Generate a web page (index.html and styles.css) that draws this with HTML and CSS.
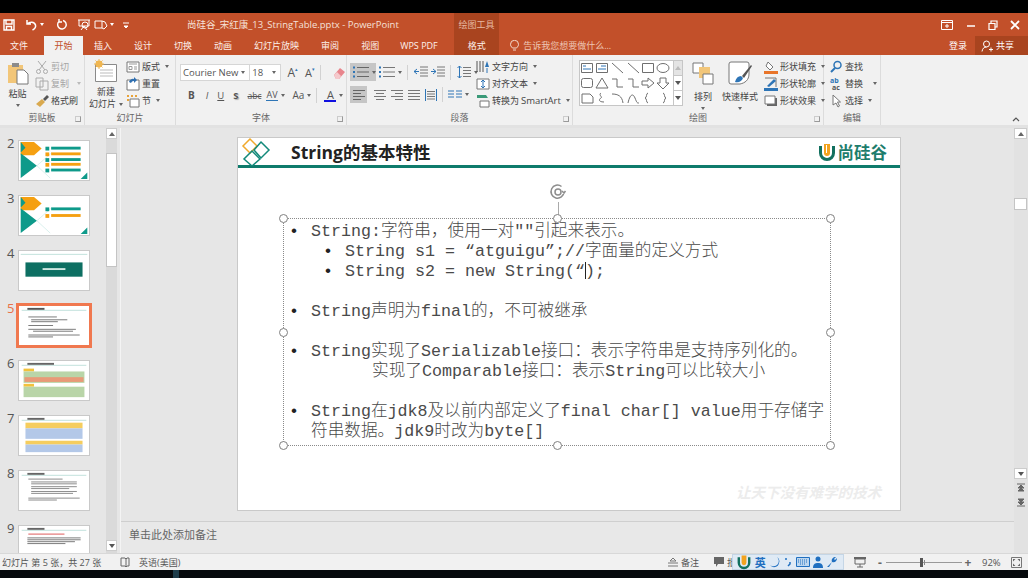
FILE: index.html
```html
<!DOCTYPE html>
<html lang="zh-CN">
<head>
<meta charset="UTF-8"/>
<title>尚硅谷_宋红康_13_StringTable.pptx - PowerPoint</title>
<link rel="stylesheet" href="styles.css">
</head>
<body>
<div class="app">
  <div class="black-top"></div>

  <div class="head">
    <div class="titlebar">
      <div class="qat">
        <svg class="q1" width="14" height="14" viewBox="0 0 14 14"><path d="M2 2h10v10H2z M4 2v4h6V2 M4.5 12V8.500h5V12" fill="none" stroke="#fff" stroke-width="1.400"/></svg>
        <svg class="q2" width="14" height="14" viewBox="0 0 14 14"><path d="M3 2v4h4 M3.500 6c2-2.500 7-2.500 8 1 .5 2-1 4-3 5" fill="none" stroke="#fff" stroke-width="1.500"/></svg>
        <span class="caret-w q3"></span>
        <svg class="q4" width="12" height="14" viewBox="0 0 12 14"><path d="M7 2.500A4.300 4.300 0 1 1 3 3.500 M3 1v3h3" fill="none" stroke="#fff" stroke-width="1.400"/></svg>
        <svg class="q5" width="14" height="14" viewBox="0 0 14 14"><path d="M1 2h12 M2 2v6h10V2 M4 12l3-4 3 4" fill="none" stroke="#fff" stroke-width="1"/><circle cx="8" cy="7" r="3" fill="none" stroke="#fff"/></svg>
        <svg class="q6" width="14" height="14" viewBox="0 0 14 14"><path d="M1 3h7v7H1z M8 3l3 1 2 4-3 3-2-1" fill="none" stroke="#fff" stroke-width="1"/></svg>
        <span class="caret-w q7"></span>
        <svg class="q8" width="8" height="8" viewBox="0 0 8 8"><path d="M1 2h6 M2 5h4l-2 2z" stroke="#fff" fill="#fff"/></svg>
      </div>
      <div class="doc-title">尚硅谷_宋红康_13_StringTable.pptx - PowerPoint</div>
      <div class="tool-title">绘图工具</div>
      <div class="win-btns">
        <svg width="12" height="10" viewBox="0 0 12 10"><path d="M.5.500h11v9H.5z M.5 2.500h11 M6 4v4 M4 6h4" fill="none" stroke="#fff"/></svg>
        <svg width="10" height="10" viewBox="0 0 10 10"><path d="M1 6h8" stroke="#fff" stroke-width="1.500"/></svg>
        <svg width="10" height="10" viewBox="0 0 10 10"><path d="M1 3.500h6v6H1z M3 3V1h6v6H7.500" fill="none" stroke="#fff" stroke-width="1.200"/></svg>
        <svg width="10" height="10" viewBox="0 0 10 10"><path d="M1 1l8 8 M9 1l-8 8" stroke="#fff" stroke-width="1.800"/></svg>
      </div>
    </div>
    <div class="tabs">
      <span class="tab tab-file">文件</span>
      <span class="tab tab-on">开始</span>
      <span class="tab">插入</span>
      <span class="tab">设计</span>
      <span class="tab">切换</span>
      <span class="tab">动画</span>
      <span class="tab">幻灯片放映</span>
      <span class="tab">审阅</span>
      <span class="tab">视图</span>
      <span class="tab tab-latin">WPS PDF</span>
      <span class="tab tab-format">格式</span>
      <span class="tell">
        <svg width="9" height="12" viewBox="0 0 9 12"><path d="M2.500 8C1 6.500.5 5.500.5 4.300a4 4 0 0 1 8 0C8.500 5.500 8 6.500 6.500 8z M3 10h3" fill="none" stroke="#f3d9cd"/></svg>
        告诉我您想要做什么...
      </span>
      <span class="login">登录</span>
      <span class="share">
        <svg width="12" height="12" viewBox="0 0 12 12"><circle cx="5.500" cy="4" r="3" fill="none" stroke="#fff"/><path d="M1 11.500c.5-3 2-4.500 4.500-4.500 M8 9.500h4 M10 7.500v4" fill="none" stroke="#fff"/></svg>
        共享
      </span>
    </div>
  </div>

  <div class="ribbon">
    <section class="group g-clip">
      <div class="group-body">
        <div class="big big-paste">
          <svg width="22" height="24" viewBox="0 0 22 24"><path d="M1 4h15v18H1z" fill="#f2c679"/><path d="M5 2h7v4H5z" fill="#8b8b8b"/><path d="M10 9h7l4 4v10H10z" fill="#fff" stroke="#777"/></svg>
          <span>粘贴</span>
          <i class="caret"></i>
        </div>
        <div class="col">
          <div class="mini off"><svg width="14" height="14" viewBox="0 0 14 14"><path d="M3 1l7 9 M11 1L4 10" stroke="#aaa" fill="none"/><circle cx="3.500" cy="11.500" r="2" fill="none" stroke="#aaa"/><circle cx="10.500" cy="11.500" r="2" fill="none" stroke="#aaa"/></svg>剪切</div>
          <div class="mini off"><svg width="14" height="14" viewBox="0 0 14 14"><path d="M1 1h7v9H1z M5 4h8v9H5z" fill="#f1f1f1" stroke="#aaa"/></svg>复制<i class="caret pale"></i></div>
          <div class="mini"><svg width="14" height="14" viewBox="0 0 14 14"><path d="M1 10l6-5 3 3-5 5z" fill="#d9a94f"/><path d="M8 5l4-4 2 2-4 4z" fill="#555"/></svg>格式刷</div>
        </div>
      </div>
      <div class="group-label">剪贴板<i class="launch"></i></div>
    </section>

    <section class="group g-slides">
      <div class="group-body">
        <div class="big big-new">
          <svg width="26" height="24" viewBox="0 0 26 24"><path d="M2.500 5.500h21v17h-21z" fill="#fff" stroke="#8a8a8a"/><path d="M7 11h13 M7 14h13 M7 17h13" stroke="#bbb"/><circle cx="6" cy="5" r="3.500" fill="#f0b650"/><path d="M6 0v10 M1 5h10 M2.500 1.500l7 7 M9.500 1.500l-7 7" stroke="#f0b650"/></svg>
          <span>新建</span>
          <span>幻灯片<i class="caret inline"></i></span>
        </div>
        <div class="col">
          <div class="mini"><svg width="14" height="14" viewBox="0 0 14 14"><path d="M1 2h12v10H1z" fill="#fff" stroke="#777"/><path d="M3 4h8 M3 6.500h3v3H3z M8 7h3 M8 9h3" stroke="#999" fill="none"/></svg>版式<i class="caret"></i></div>
          <div class="mini"><svg width="14" height="14" viewBox="0 0 14 14"><path d="M1 3h12v10H1z" fill="#fff" stroke="#777"/><path d="M3 5a4 4 0 0 1 5-3v-2l3 3-3 3V4a3 3 0 0 0-3 2z" fill="#2f6fb0"/></svg>重置</div>
          <div class="mini"><svg width="14" height="14" viewBox="0 0 14 14"><path d="M4 5h9v8H4z" fill="#fff" stroke="#777"/><path d="M1 1h2v2H1z M5 1h2v2H5z M9 1h2v2H9z M1 5h2v2H1z" fill="#e8a33a"/></svg>节<i class="caret"></i></div>
        </div>
      </div>
      <div class="group-label">幻灯片</div>
    </section>

    <section class="group g-font">
      <div class="group-body rows">
        <div class="tool-row row-combo">
          <span class="combo combo-font">Courier New<i class="caret"></i></span>
          <span class="combo combo-size">18<i class="caret"></i></span>
          <span class="glyph glyph-lg">A<sup>▴</sup></span>
          <span class="glyph">A<sup>▾</sup></span>
          <span class="sep"></span>
          <svg width="14" height="14" viewBox="0 0 14 14"><path d="M2 9l6-7 5 4-6 7H4z" fill="#e8858c"/><path d="M2 9l3-3 4 4-2 3H4z" fill="#f5c9cc"/></svg>
        </div>
        <div class="tool-row row-fmt">
          <b class="glyph">B</b>
          <i class="glyph">I</i>
          <u class="glyph">U</u>
          <s class="glyph glyph-shadow">S</s>
          <s class="glyph glyph-sm">abc</s>
          <span class="glyph glyph-av">AV</span><i class="caret"></i>
          <span class="glyph glyph-aa">Aa</span><i class="caret"></i>
          <span class="sep"></span>
          <span class="glyph glyph-color">A</span><i class="caret"></i>
        </div>
      </div>
      <div class="group-label">字体<i class="launch"></i></div>
    </section>

    <section class="group g-para">
      <div class="group-body">
        <div class="rows">
          <div class="tool-row row-list">
            <span class="hi hi-list">
              <svg width="16" height="12" viewBox="0 0 16 12"><path d="M0 1.500h2 M0 6h2 M0 10.500h2" stroke="#2e75b6" stroke-width="2"/><path d="M4 1.500h12 M4 6h12 M4 10.500h12" stroke="#666"/></svg><i class="caret"></i>
            </span>
            <span class="btn-list">
              <svg width="16" height="12" viewBox="0 0 16 12"><path d="M0 1.500h2 M0 6h2 M0 10.500h2" stroke="#2e75b6" stroke-width="2"/><path d="M4 1.500h12 M4 6h12 M4 10.500h12" stroke="#777"/></svg><i class="caret"></i>
            </span>
            <span class="sep"></span>
            <svg width="14" height="12" viewBox="0 0 14 12"><path d="M6 1h8 M6 4h8 M6 7h8 M6 10h8" stroke="#777"/><path d="M0 5.500h5 M3 3L0 5.500 3 8" stroke="#2e75b6" fill="none"/></svg>
            <svg width="14" height="12" viewBox="0 0 14 12"><path d="M6 1h8 M6 4h8 M6 7h8 M6 10h8" stroke="#777"/><path d="M0 5.500h5 M2 3l3 2.500L2 8" stroke="#2e75b6" fill="none"/></svg>
            <span class="sep"></span>
            <svg width="14" height="14" viewBox="0 0 14 14"><path d="M6 2.500h8 M6 5.500h8 M6 8.500h8 M6 11.500h8" stroke="#777"/><path d="M2.500 1v12 M.5 3l2-2 2 2 M.5 11l2 2 2-2" stroke="#2e75b6" fill="none"/></svg><i class="caret"></i>
          </div>
          <div class="tool-row row-align">
            <span class="hi hi-align"><svg width="12" height="10" viewBox="0 0 12 10"><path d="M0 .500h12 M0 3.500h8 M0 6.500h12 M0 9.500h8" stroke="#666"/></svg></span>
            <svg width="12" height="10" viewBox="0 0 12 10"><path d="M0 .500h12 M2 3.500h8 M0 6.500h12 M2 9.500h8" stroke="#777"/></svg>
            <svg width="12" height="10" viewBox="0 0 12 10"><path d="M0 .500h12 M4 3.500h8 M0 6.500h12 M4 9.500h8" stroke="#777"/></svg>
            <svg width="12" height="10" viewBox="0 0 12 10"><path d="M0 .500h12 M0 3.500h12 M0 6.500h12 M0 9.500h12" stroke="#777"/></svg>
            <svg width="12" height="12" viewBox="0 0 12 12"><path d="M.5 0v12 M11.500 0v12" stroke="#2e75b6"/><path d="M2 2.500h8 M2 5h8 M2 7.500h8 M2 10h8" stroke="#777"/></svg>
            <span class="sep"></span>
            <svg width="14" height="10" viewBox="0 0 14 10"><path d="M0 1h6 M0 4h6 M0 7h6 M8 1h6 M8 4h6 M8 7h6" stroke="#2e75b6"/></svg><i class="caret"></i>
          </div>
        </div>
        <div class="col col-text">
          <div class="mini"><svg width="14" height="14" viewBox="0 0 14 14"><path d="M1 1v11 M4 1v11 M7 1v11" stroke="#555"/><path d="M11 1l-2 6h4z" fill="#2e75b6"/><path d="M11 8v5" stroke="#2e75b6"/></svg>文字方向<i class="caret"></i></div>
          <div class="mini"><svg width="14" height="14" viewBox="0 0 14 14"><path d="M1 2h12v10H1z" fill="#fff" stroke="#777"/><path d="M7 3v8 M5 5l2-2 2 2 M5 9l2 2 2-2" stroke="#2e75b6" fill="none"/></svg>对齐文本<i class="caret"></i></div>
          <div class="mini"><svg width="14" height="14" viewBox="0 0 14 14"><path d="M1 1h9l2 3H1z" fill="#3a9a78"/><path d="M4 7h9v6H4z" fill="#fff" stroke="#777"/></svg>转换为 <span class="latin">SmartArt</span><i class="caret"></i></div>
        </div>
      </div>
      <div class="group-label">段落<i class="launch"></i></div>
    </section>

    <section class="group g-draw">
      <div class="group-body">
        <div class="gallery">
          <svg width="93" height="44" viewBox="0 0 93 44" fill="none" stroke="#6f6f6f">
            <path d="M1.500 2.500h11v9h-11z M16.500 2.500h11v9h-11z"/>
            <path d="M3 5h3 M3 8h8 M21 5h5 M18 8h8" stroke="#2e75b6"/>
            <path d="M32 2l11 10 M48 2l11 10"/>
            <path d="M62.500 2.500h11v9h-11z"/>
            <ellipse cx="83" cy="7" rx="6" ry="4.500"/>
            <rect x="1.500" y="17.500" width="11" height="9" rx="2"/>
            <path d="M22 17l6 10H16z"/>
            <path d="M32 18h5v8h6 M48 18h5v8h6"/>
            <path d="M62 20h6v-3l6 5-6 5v-3h-6z M80 17h6v5h3l-6 6-6-6h3z"/>
            <path d="M2 33h8l3 3v6H2z M21 32c-3 2 2 4 0 5s-3 4 3 4"/>
            <path d="M32 33c6 0 10 2 11 9 M48 42c2-9 5-10 7-5s2 5 4 5"/>
            <path d="M68 32c-2 0-1 5-3 5 2 0 1 5 3 5 M83 32c2 0 1 5 3 5-2 0-1 5-3 5"/>
          </svg>
          <div class="gallery-bar">
            <span class="gb gb-dim"><i class="up"></i></span>
            <span class="gb"><i class="down"></i></span>
            <span class="gb"><i class="down"></i></span>
          </div>
        </div>
        <div class="big big-arr">
          <svg width="22" height="24" viewBox="0 0 22 24"><path d="M1 2h10v10H1z" fill="#fff" stroke="#777"/><path d="M7 6h11v11H7z" fill="#f2c679"/><path d="M11 13h10v10H11z" fill="#fff" stroke="#777"/></svg>
          <span>排列</span>
          <i class="caret"></i>
        </div>
        <div class="big big-style">
          <svg width="26" height="24" viewBox="0 0 26 24"><path d="M4 1h16a2 2 0 0 1 2 2v10c0 6-4 9-9 10H4a2 2 0 0 1-2-2V3a2 2 0 0 1 2-2z" fill="#fff" stroke="#777"/><path d="M8 21c1-4 3-6 6-6l2 2c-1 3-4 5-8 4z" fill="#2e75b6"/><path d="M15 15l9-11 1 1-8 12z" fill="#555"/></svg>
          <span>快速样式</span>
          <i class="caret"></i>
        </div>
        <div class="col">
          <div class="mini"><svg width="14" height="14" viewBox="0 0 14 14"><path d="M4 2l5 5-3 3-4-4z" fill="#fff" stroke="#777"/><path d="M0 11h14v3H0z" fill="#e8752a"/></svg>形状填充<i class="caret"></i></div>
          <div class="mini"><svg width="14" height="14" viewBox="0 0 14 14"><path d="M1 1h11v9" fill="none" stroke="#777"/><path d="M3 9l7-7 2 2-7 6z" fill="#2e75b6"/><path d="M0 11h14v3H0z" fill="#2e75b6"/></svg>形状轮廓<i class="caret"></i></div>
          <div class="mini"><svg width="14" height="14" viewBox="0 0 14 14"><path d="M3 4h10v8H3z" fill="#666"/><path d="M1 2h10v8H1z" fill="#fff" stroke="#777"/></svg>形状效果<i class="caret"></i></div>
        </div>
      </div>
      <div class="group-label">绘图<i class="launch"></i></div>
    </section>

    <section class="group g-edit">
      <div class="group-body">
        <div class="col">
          <div class="mini"><svg width="14" height="14" viewBox="0 0 14 14"><circle cx="8.500" cy="5" r="3.500" fill="none" stroke="#2e75b6" stroke-width="1.500"/><path d="M6 8l-4 4" stroke="#2e75b6" stroke-width="2"/></svg>查找</div>
          <div class="mini"><svg width="14" height="14" viewBox="0 0 14 14"><text x="1" y="6" class="tiny-ab">ab</text><text x="3" y="13" class="tiny-ac">ac</text></svg>替换<i class="caret gap"></i></div>
          <div class="mini"><svg width="14" height="14" viewBox="0 0 14 14"><path d="M4 1v10l3-2 2 4 1.500-1-2-4h3z" fill="#fff" stroke="#777"/></svg>选择<i class="caret"></i></div>
        </div>
      </div>
      <div class="group-label">编辑</div>
    </section>

    <div class="collapse"><svg width="8" height="6" viewBox="0 0 8 6"><path d="M1 5l3-3 3 3" fill="none" stroke="#555" stroke-width="1.200"/></svg></div>
  </div>

  <div class="workspace">
    <aside class="thumbs">
      <div class="thumb-list">
        <div class="thumb-row"><span class="num">2</span>
          <svg class="thumb" viewBox="0 0 72 41">
            <rect width="72" height="41" fill="#fff"/>
            <path d="M18 26L34 12 M18 26l14 13" stroke="#d8efec" fill="none"/>
            <path d="M1 1h14l8 7-8 7H1z" fill="#f5a011"/><path d="M1 1l5 6-5 5z M1 13l17 13L1 39z" fill="#0e9a8a"/>
            <g fill="#0e9a8a"><rect x="27" y="6" width="4" height="4"/><rect x="33" y="6" width="31" height="3"/><rect x="27" y="18" width="4" height="4"/><rect x="33" y="18" width="31" height="3"/><rect x="27" y="29" width="4" height="4"/><rect x="33" y="29" width="31" height="3"/></g>
            <g fill="#f5a011"><rect x="27" y="12" width="4" height="4"/><rect x="33" y="12" width="31" height="3"/><rect x="27" y="23" width="4" height="4"/><rect x="33" y="23" width="31" height="3"/></g>
            <path d="M64 40l7-7v7z" fill="#0e9a8a"/>
          </svg>
        </div>
        <div class="thumb-row"><span class="num">3</span>
          <svg class="thumb" viewBox="0 0 72 41">
            <rect width="72" height="41" fill="#fff"/>
            <path d="M18 26L34 12 M18 26l14 13" stroke="#d8efec" fill="none"/>
            <path d="M1 1h14l8 7-8 7H1z" fill="#f5a011"/><path d="M1 1l5 6-5 5z M1 13l17 13L1 39z" fill="#0e9a8a"/>
            <rect x="27" y="12" width="4" height="4" fill="#0e9a8a"/><rect x="33" y="12" width="31" height="3" fill="#0e9a8a"/>
            <rect x="27" y="19" width="4" height="4" fill="#f5a011"/><rect x="33" y="19" width="31" height="3" fill="#f5a011"/>
            <path d="M64 40l7-7v7z" fill="#0e9a8a"/>
          </svg>
        </div>
        <div class="thumb-row"><span class="num">4</span>
          <svg class="thumb" viewBox="0 0 72 41">
            <rect width="72" height="41" fill="#fff"/>
            <rect x="1" y="3" width="70" height="1" fill="#bfe0da"/>
            <rect x="6" y="12" width="60" height="15" fill="#0d6f62"/>
            <rect x="24" y="18" width="24" height="2" fill="#cfe8e2"/>
          </svg>
        </div>
        <div class="thumb-row thumb-on"><span class="num">5</span>
          <svg class="thumb" viewBox="0 0 72 41">
            <rect width="72" height="41" fill="#fff"/>
            <rect x="2" y="4" width="68" height="1" fill="#bfe0da"/><rect x="8" y="2" width="18" height="2" fill="#555"/>
            <g fill="#777"><rect x="9" y="11" width="30" height="1"/><rect x="12" y="14" width="38" height="1"/><rect x="12" y="16" width="28" height="1"/><rect x="9" y="20" width="26" height="1"/><rect x="9" y="24" width="50" height="1"/><rect x="14" y="26" width="42" height="1"/><rect x="9" y="30" width="54" height="1"/><rect x="9" y="32" width="26" height="1"/></g>
          </svg>
        </div>
        <div class="thumb-row"><span class="num">6</span>
          <svg class="thumb" viewBox="0 0 72 41">
            <rect width="72" height="41" fill="#fff"/>
            <rect x="2" y="4" width="68" height="1" fill="#bfe0da"/><rect x="8" y="2" width="28" height="2" fill="#666"/>
            <rect x="4" y="8" width="11" height="3" fill="#f2c23c"/><rect x="4" y="11" width="64" height="12" fill="#b9d5a8"/><rect x="5" y="17" width="62" height="5" fill="#e89a78"/>
            <rect x="4" y="24" width="11" height="3" fill="#f2c23c"/><rect x="4" y="27" width="64" height="11" fill="#b9d5a8"/>
          </svg>
        </div>
        <div class="thumb-row"><span class="num">7</span>
          <svg class="thumb" viewBox="0 0 72 41">
            <rect width="72" height="41" fill="#fff"/>
            <rect x="2" y="4" width="68" height="1" fill="#bfe0da"/><rect x="8" y="2" width="18" height="2" fill="#666"/>
            <rect x="6" y="7" width="60" height="6" fill="#f5cd5e"/><rect x="6" y="13" width="60" height="11" fill="#b3c8e8"/>
            <rect x="6" y="26" width="60" height="4" fill="#f5cd5e"/><rect x="6" y="30" width="60" height="8" fill="#b3c8e8"/>
          </svg>
        </div>
        <div class="thumb-row"><span class="num">8</span>
          <svg class="thumb" viewBox="0 0 72 41">
            <rect width="72" height="41" fill="#fff"/>
            <rect x="2" y="4" width="68" height="1" fill="#bfe0da"/><rect x="8" y="2" width="18" height="2" fill="#666"/>
            <g fill="#888"><rect x="9" y="8" width="36" height="1"/><rect x="12" y="11" width="48" height="1"/><rect x="12" y="13" width="48" height="1"/><rect x="12" y="16" width="48" height="1"/><rect x="12" y="18" width="40" height="1"/><rect x="12" y="21" width="48" height="1"/><rect x="12" y="23" width="44" height="1"/><rect x="9" y="28" width="54" height="1"/><rect x="9" y="30" width="30" height="1"/></g>
          </svg>
        </div>
        <div class="thumb-row"><span class="num">9</span>
          <svg class="thumb" viewBox="0 0 72 41">
            <rect width="72" height="41" fill="#fff"/>
            <rect x="2" y="4" width="68" height="1" fill="#bfe0da"/><rect x="8" y="2" width="18" height="2" fill="#666"/>
            <rect x="9" y="8" width="38" height="1" fill="#d55"/>
            <g fill="#777"><rect x="8" y="12" width="56" height="1"/><rect x="8" y="14" width="56" height="1"/><rect x="8" y="16" width="50" height="1"/><rect x="8" y="18" width="40" height="1"/></g>
          </svg>
        </div>
      </div>
      <div class="scroll scroll-left">
        <span class="sbtn"><i class="up"></i></span>
        <span class="sthumb sthumb-left"></span>
        <span class="sbtn sbtn-end"><i class="down"></i></span>
      </div>
    </aside>

    <main class="editor">
      <div class="stage">
        <article class="slide">
          <header class="slide-head">
            <svg class="diamonds" width="32" height="28" viewBox="0 0 32 28" fill="none" stroke-width="1.500">
              <path d="M10 1l7 7-7 7-7-7z" stroke="#f0a92c"/>
              <path d="M21 4l8 8-8 8-7-8z" stroke="#12897a"/>
              <path d="M12 13l8 8-8 7-8-7z" stroke="#12897a"/>
            </svg>
            <h1 class="slide-title">String的基本特性</h1>
            <div class="brand">
              <svg width="20" height="20" viewBox="0 0 20 20"><path d="M2 4v7a8 8 0 0 0 16 0V4h-3v7a5 5 0 0 1-10 0V4z" fill="#12705f"/><path d="M7 2h6v9a3 3 0 0 1-6 0z" fill="#f2a31f"/><path d="M9.500 3v8" stroke="#fff"/></svg>
              <span>尚硅谷</span>
            </div>
          </header>

          <div class="rotate">
            <svg width="20" height="20" viewBox="0 0 20 20" fill="none" stroke="#8d8d8d" stroke-width="1.500"><path d="M16 10a6.500 6.500 0 1 1-2.500-5.500 M17.500 9l-1.500 2-2-2"/><circle cx="10" cy="10" r="3"/></svg>
            <span class="rotate-line"></span>
          </div>

          <div class="textbox">
            <ul class="lines">
              <li class="l1">String:字符串，使用一对""引起来表示。</li>
              <li class="l2">String s1 = “atguigu”;//字面量的定义方式</li>
              <li class="l2">String s2 = new String(“<span class="cursor"></span>);</li>
              <li class="blank"></li>
              <li class="l1">String声明为final的，不可被继承</li>
              <li class="blank"></li>
              <li class="l1">String实现了Serializable接口：表示字符串是支持序列化的。</li>
              <li class="cont">实现了Comparable接口：表示String可以比较大小</li>
              <li class="blank"></li>
              <li class="l1">String在jdk8及以前内部定义了final char[] value用于存储字<br>符串数据。jdk9时改为byte[]</li>
            </ul>
            <i class="handle h-tl"></i><i class="handle h-tc"></i><i class="handle h-tr"></i>
            <i class="handle h-ml"></i><i class="handle h-mr"></i>
            <i class="handle h-bl"></i><i class="handle h-bc"></i><i class="handle h-br"></i>
          </div>

          <div class="watermark">让天下没有难学的技术</div>
        </article>
      </div>
      <div class="notes">单击此处添加备注</div>
    </main>

    <div class="scroll scroll-right">
      <span class="sbtn"><i class="up"></i></span>
      <span class="sthumb sthumb-right"></span>
      <span class="sbtn sbtn-end"><i class="down"></i></span>
      <svg class="page-jump" width="10" height="10" viewBox="0 0 10 10"><path d="M1 1h8 M5 2L2 5h6z M5 5L2 8h6z" stroke="#666" fill="#666"/></svg>
      <svg class="page-jump" width="10" height="10" viewBox="0 0 10 10"><path d="M1 9h8 M5 8L2 5h6z M5 5L2 2h6z" stroke="#666" fill="#666"/></svg>
    </div>
  </div>

  <footer class="status">
    <span class="st-count">幻灯片 第 5 张，共 27 张</span>
    <svg class="st-book" width="12" height="12" viewBox="0 0 12 12"><path d="M1 2h4l1 1 1-1h2v8H7l-1 1-1-1H1z M6 3v8" fill="none" stroke="#666"/></svg>
    <span class="st-lang">英语(美国)</span>
    <span class="st-notes">
      <svg width="10" height="10" viewBox="0 0 10 10"><path d="M5 1L2 4h6z M0 6h10 M0 9h10" stroke="#777" fill="none"/></svg>备注
    </span>
    <span class="st-comment">
      <svg width="10" height="10" viewBox="0 0 10 10"><path d="M0 0h10v7H4L2 10V7H0z" fill="#666"/></svg>批
    </span>
    <div class="ime">
      <svg width="16" height="16" viewBox="0 0 20 20"><path d="M2 4v7a8 8 0 0 0 16 0V4h-3v7a5 5 0 0 1-10 0V4z" fill="#12705f"/><path d="M7 2h6v9a3 3 0 0 1-6 0z" fill="#f2a31f"/></svg>
      <b>英</b>
      <svg width="12" height="12" viewBox="0 0 12 12"><path d="M8 1a5 5 0 0 1-7 8 5 5 0 0 0 9-2 5 5 0 0 0-2-6z" fill="#1f6fc0"/></svg>
      <svg width="10" height="12" viewBox="0 0 10 12"><circle cx="3" cy="3" r="1" fill="#1f6fc0"/><path d="M7 6v2l-2 2" stroke="#1f6fc0" fill="none" stroke-width="1.500"/></svg>
      <svg width="14" height="10" viewBox="0 0 14 10"><path d="M.5.500h13v9H.5z" fill="#bcd6ee" stroke="#1f6fc0"/><path d="M2 3h10 M2 5h10 M4 7h6" stroke="#1f6fc0" stroke-dasharray="1 1"/></svg>
      <svg width="10" height="12" viewBox="0 0 10 12"><circle cx="5" cy="3" r="2.500" fill="#1f6fc0"/><path d="M0 12c0-4 2-5 5-5s5 1 5 5z" fill="#1f6fc0"/></svg>
      <svg width="12" height="12" viewBox="0 0 12 12"><path d="M1 11l5-5c-1-3 1-5 4-5L8 3l1 1 2-2c0 3-2 5-5 4l-3 5z" fill="#1f6fc0"/></svg>
    </div>
    <svg class="st-show" width="12" height="12" viewBox="0 0 12 12"><path d="M0 1h12v2H0z" fill="#666"/><path d="M1 3h10v5H1z M6 8v3 M3 11h6" fill="none" stroke="#666"/></svg>
    <div class="zoom">
      <span class="z-sign">-</span>
      <div class="z-track"><span class="z-mark"></span><span class="z-knob"></span></div>
      <span class="z-sign">+</span>
      <span class="z-val">92%</span>
      <svg width="11" height="11" viewBox="0 0 11 11"><path d="M.5.500h10v10H.5z" fill="none" stroke="#777"/><path d="M2 2h2.500L2 4.500z M9 2v2.500L6.500 2z M2 9V6.500L4.500 9z M9 9H6.500L9 6.500z" fill="#666"/></svg>
    </div>
  </footer>
  <div class="black-bottom"><span class="tint"></span></div>
</div>
</body>
</html>
```

FILE: styles.css
```css
* { box-sizing: border-box; }
html, body { margin: 0; padding: 0; }
body { width: 1028px; height: 578px; overflow: hidden; background: #000; color: #444; font-family: "Open Sans", "Noto Sans CJK SC", sans-serif; font-size: 9px; }
svg { display: block; flex: none; }
.app { width: 1028px; height: 578px; display: flex; flex-direction: column; }
.black-top { height: 13px; background: #000; flex: none; }
.black-bottom { height: 8px; background: #06090c; flex: none; display: flex; }
.tint { width: 6px; margin-left: 173px; background: #1d3c4a; }

/* title + tabs */
.head { background: #c2502a; color: #fff; flex: none; height: 42px; }
.titlebar { height: 23px; display: flex; }
.qat { width: 187px; display: flex; align-items: center; flex: none; }
.q1 { margin-left: 2px; }
.q2 { margin-left: 8px; }
.q3 { margin-left: 2px; }
.q4 { margin-left: 12px; }
.q5 { margin-left: 9px; }
.q6 { margin-left: 3px; }
.q7 { margin-left: 2px; }
.q8 { margin-left: 8px; }
.caret-w { width: 0; height: 0; border: 2px solid transparent; border-top: 3px solid #fff; border-bottom: 0; }
.doc-title { width: 267px; font-size: 9.5px; line-height: 24px; color: #f6e2d9; white-space: nowrap; }
.tool-title { width: 45px; background: #a9441f; line-height: 24px; text-align: center; color: #e6b7a2; }
.win-btns { margin-left: auto; display: flex; align-items: center; gap: 12px; padding-right: 8px; }
.win-btns svg:first-child { margin-right: 1px; }
.tabs { height: 19px; display: flex; line-height: 19px; }
.tab { padding: 0 11px; color: #fdf1eb; }
.tab-file { padding: 0 16px 0 10px; }
.tab-on { background: #f1f1f1; color: #c2502a; padding: 0 10.500px; }
.tab-latin { font-size: 9px; padding: 0 10px; width: 62px; white-space: nowrap; }
.tab-format { margin-left: 2px; background: #a9441f; width: 45px; text-align: center; padding: 0; }
.tell { display: flex; align-items: center; gap: 4px; margin-left: 11px; color: #eec6b4; white-space: nowrap; }
.login { margin-left: auto; margin-right: 8px; }
.share { width: 53px; background: #a9441f; display: flex; align-items: center; gap: 3px; padding-left: 6px; }

/* ribbon */
.ribbon { flex: none; height: 70px; background: #f1f1f1; display: flex; position: relative; }
.group { border-right: 1px solid #dcdcdc; display: flex; flex-direction: column; position: relative; flex: none; }
.group-body { flex: 1; display: flex; min-height: 0; }
.group-label { height: 14px; line-height: 14px; text-align: center; color: #666; }
.g-clip { width: 85px; }
.g-slides { width: 91px; }
.g-font { width: 171px; }
.g-para { width: 226px; }
.g-draw { width: 251px; }
.g-edit { width: 57px; }
.launch { position: absolute; right: 3px; bottom: 3px; width: 6px; height: 6px; border: 1px solid #999; border-top-color: #ccc; border-left-color: #ccc; }
.collapse { position: absolute; right: 8px; bottom: 3px; }

.caret { display: inline-block; width: 0; height: 0; border: 2px solid transparent; border-top: 3px solid #666; border-bottom: 0; flex: none; margin-left: 3px; }
.caret.pale { border-top-color: #bbb; margin-left: 6px; }
.caret.inline { vertical-align: middle; }
.caret.gap { margin-left: 8px; }
.big { display: flex; flex-direction: column; align-items: center; line-height: 12px; flex: none; color: #444; padding-top: 6px; }
.big > svg { margin-bottom: 3px; }
.big-paste { width: 34px; padding-left: 1px; }
.big-paste .caret { margin: 4px 0 0 0; }
.big-new { width: 44px; margin-left: -1px; padding-top: 4px; }
.big-new > svg { margin-bottom: 3px; }
.big-arr { width: 28px; margin-left: 6px; }
.big-arr > svg { margin-bottom: 6px; }
.big-arr .caret { margin: 4px 0 0 0; }
.big-style { width: 42px; margin-left: 2px; }
.big-style > svg { margin-bottom: 6px; }
.big-style .caret { margin: 4px 0 0 0; }
.col { display: flex; flex-direction: column; padding-top: 3px; }
.g-clip .col { margin-left: 1px; }
.g-slides .col { margin-left: -2px; }
.col-text { margin-left: 0; }
.mini { height: 17px; display: flex; align-items: center; gap: 2px; white-space: nowrap; }
.mini.off { color: #a5a5a5; }
.latin { font-size: 9.500px; }
.tiny-ab { font-size: 7px; fill: #2e75b6; font-weight: 700; }
.tiny-ac { font-size: 7px; fill: #555; font-weight: 700; }

.rows { display: flex; flex-direction: column; }
.g-font .rows { padding: 9px 0 0 4px; gap: 6px; }
.tool-row { display: flex; align-items: center; }
.row-combo { height: 17px; }
.row-fmt { height: 16px; margin-top: 0; padding-left: 8px; }
.combo { height: 17px; background: #fff; border: 1px solid #d6d6d6; display: flex; align-items: center; justify-content: space-between; font-size: 9.500px; padding: 0 4px 0 2px; color: #555; white-space: nowrap; }
.combo-font { width: 71px; }
.combo-size { width: 37px; border-left: 0; }
.glyph { font-size: 11px; color: #555; text-decoration-thickness: 1px; display: block; }
.glyph sup { font-size: 5px; color: #2e75b6; vertical-align: 6px; line-height: 0; }
.glyph-lg { margin-left: 6px; font-size: 12px; }
.row-combo .glyph + .glyph { margin-left: 7px; }
.row-combo svg { margin-left: 6px; }
.row-fmt .glyph { font-size: 9.500px; margin-right: 9px; }
.row-fmt b.glyph { margin-right: 11px; font-size: 10px; }
.row-fmt .glyph-shadow { font-weight: 700; text-shadow: 1px 1px 1px #aaa; text-decoration: none; }
.row-fmt .glyph-sm { font-size: 8.500px; margin-right: 5px; }
.row-fmt .glyph-av { margin-right: 0; font-size: 9px; border-bottom: 1px solid #2e75b6; line-height: 10px; }
.row-fmt .glyph-aa { margin: 0 0 0 8px; font-size: 10px; }
.row-fmt .sep { margin: 0 7px 0 5px; }
.row-fmt .glyph-color { margin-right: 0; font-size: 11px; line-height: 11px; border-bottom: 2px solid #1010e0; width: 12px; text-align: center; }
.sep { width: 1px; height: 15px; background: #d2d2d2; flex: none; margin: 0 5px; }

.g-para .rows { width: 129px; flex: none; padding: 8px 0 0 3px; gap: 5px; }
.row-list { height: 18px; }
.hi { background: #c6c6c6; display: flex; align-items: center; flex: none; }
.hi-list { width: 26px; height: 18px; padding-left: 3px; }
.btn-list { display: flex; align-items: center; margin-left: 3px; }
.row-list .sep { margin: 0 6px 0 5px; }
.row-list svg + svg { margin-left: 3px; }
.row-align { height: 17px; }
.hi-align { width: 17px; height: 17px; padding-left: 3px; margin-right: 2px; }
.row-align > svg { margin-left: 5px; }
.row-align .sep + svg { margin-left: 0; }

.gallery { width: 104px; height: 46px; margin: 5px 0 0 6px; background: #fff; border: 1px solid #c6c6c6; display: flex; flex: none; }
.gallery-bar { width: 9px; flex: none; display: flex; flex-direction: column; border-left: 1px solid #c6c6c6; }
.gb { flex: 1; display: flex; align-items: center; justify-content: center; border-bottom: 1px solid #c6c6c6; }
.gb:last-child { border-bottom: 0; }
.gb-dim { background: #e4e4e4; }
.up, .down { display: block; width: 0; height: 0; border: 3px solid transparent; }
.up { border-bottom: 4px solid #666; border-top: 0; }
.down { border-top: 4px solid #555; border-bottom: 0; }
.gb-dim .up { border-bottom-color: #bbb; }
.g-draw .col { margin-left: 3px; }
.g-edit .col { margin-left: 5px; }

/* workspace */
.workspace { flex: 1; min-height: 0; display: flex; background: #e6e6e6; border-top: 3px solid #e2e2e2; }
.thumbs { width: 121px; flex: none; display: flex; border-right: 1px solid #f4f4f4; position: relative; overflow: hidden; }
.thumb-list { width: 106px; flex: none; padding-top: 12px; display: flex; flex-direction: column; gap: 14px; }
.thumb-row { display: flex; padding-left: 7px; height: 41px; flex: none; }
.num { width: 11px; height: 15px; margin-top: -4px; font-size: 13px; line-height: 15px; color: #555; font-family: "Open Sans", sans-serif; }
.thumb { width: 72px; height: 41px; border: 1px solid #c9c9c9; background: #fff; }
.thumb-on .num { color: #e8724a; }
.thumb-on .thumb { outline: 2px solid #f0784f; border-color: #f0784f; }
.scroll { background: #dadada; display: flex; flex-direction: column; align-items: center; flex: none; }
.scroll-left { width: 11px; height: 100%; padding-bottom: 2px; }
.scroll-right { width: 14px; margin-left: 0; background: #e2e2e2; padding-right: 1px; }
.sbtn { width: 100%; height: 11px; background: #fff; border: 1px solid #ccc; display: flex; align-items: center; justify-content: center; flex: none; }
.sthumb { width: 100%; background: #fff; border: 1px solid #c4c4c4; flex: none; }
.sthumb-left { height: 114px; margin-top: 14px; }
.sthumb-right { height: 12px; margin-top: 59px; }
.sbtn-end { margin-top: auto; }
.scroll-right .sbtn-end { margin-top: 258px; }
.page-jump { margin-top: 4px; }

.editor { flex: 1; min-width: 0; display: flex; flex-direction: column; }
.stage { flex: 1; padding: 9px 0 0 116px; min-height: 0; }
.slide { width: 664px; height: 374px; background: #fff; border: 1px solid #c9c9c9; position: relative; }
.slide-head { height: 30px; border-bottom: 3px solid #0f7b6c; display: flex; align-items: center; }
.diamonds { margin: 0 0 0 2px; }
.slide-title { margin: 0 0 0 19px; font-size: 17.500px; font-weight: 700; color: #222; font-family: "Open Sans", "Noto Sans CJK SC", sans-serif; line-height: 28px; }
.brand { margin-left: auto; margin-right: 13px; display: flex; align-items: center; gap: 1px; color: #1d7d6c; font-size: 16.500px; font-weight: 700; }
.rotate { position: absolute; left: 310px; top: 44px; width: 20px; display: flex; flex-direction: column; align-items: center; }
.rotate-line { width: 1px; height: 16px; background: #aaa; }
.textbox { position: absolute; left: 45px; top: 80px; width: 548px; height: 228px; border: 1px dotted #8a8a8a; padding-top: 3px; }
.lines { list-style: none; margin: 0; padding: 0 0 0 27px; font-family: "Liberation Mono", "Noto Sans CJK SC", monospace; font-size: 16.670px; font-weight: 300; line-height: 20px; color: #4a4a4a; }
.lines li { white-space: pre; }
.lines .blank { height: 20px; }
.lines .l1::before, .lines .l2::before { content: "•"; display: inline-block; width: 22px; margin-left: -22px; color: #222; }
.lines .l2 { margin-left: 34px; }
.lines .cont { margin-left: 61px; }
.cursor { display: inline-block; width: 1px; height: 17px; background: #222; vertical-align: -3px; margin-right: -1px; }
.handle { position: absolute; width: 9px; height: 9px; border-radius: 50%; border: 1px solid #808080; background: #fff; }
.h-tl { left: -5px; top: -5px; }
.h-tc { left: 269px; top: -5px; }
.h-tr { right: -5px; top: -5px; }
.h-ml { left: -5px; top: 109px; }
.h-mr { right: -5px; top: 109px; }
.h-bl { left: -5px; bottom: -5px; }
.h-bc { left: 269px; bottom: -5px; }
.h-br { right: -5px; bottom: -5px; }
.watermark { position: absolute; right: 19px; top: 343px; font-size: 14.500px; font-weight: 700; font-style: italic; color: #ececec; white-space: nowrap; }
.notes { height: 32px; flex: none; border-top: 1px solid #cfcfcf; padding-left: 8px; line-height: 25px; font-size: 11px; color: #666; background: #e8e8e8; }

/* status */
.status { height: 17px; flex: none; background: #f1f1f1; border-top: 1px solid #d8d8d8; display: flex; align-items: center; color: #555; white-space: nowrap; }
.st-count { margin-left: 2px; width: 118px; }
.st-book { margin-right: 7px; }
.st-lang { width: 529px; }
.st-notes, .st-comment { display: flex; align-items: center; gap: 3px; }
.st-notes { width: 46px; }
.st-comment { width: 18px; }
.ime { width: 112px; height: 16px; background: #dfeaf5; border: 1px solid #c5d6e6; display: flex; align-items: center; justify-content: space-between; padding: 0 5px 0 3px; color: #1f6fc0; font-size: 11px; position: relative; }
.ime b { font-weight: 700; }
.st-show { margin-left: 10px; }
.zoom { display: flex; align-items: center; margin-left: 9px; }
.z-sign { font-size: 12px; width: 10px; font-weight: 700; color: #666; text-align: center; }
.z-track { width: 76px; height: 1px; background: #999; margin: 0 1px; position: relative; }
.z-mark { position: absolute; left: 38px; top: -2px; width: 1px; height: 5px; background: #888; }
.z-knob { position: absolute; left: 34px; top: -4px; width: 3px; height: 9px; background: #555; }
.z-val { margin: 0 10px 0 9px; font-size: 9.500px; }
```
